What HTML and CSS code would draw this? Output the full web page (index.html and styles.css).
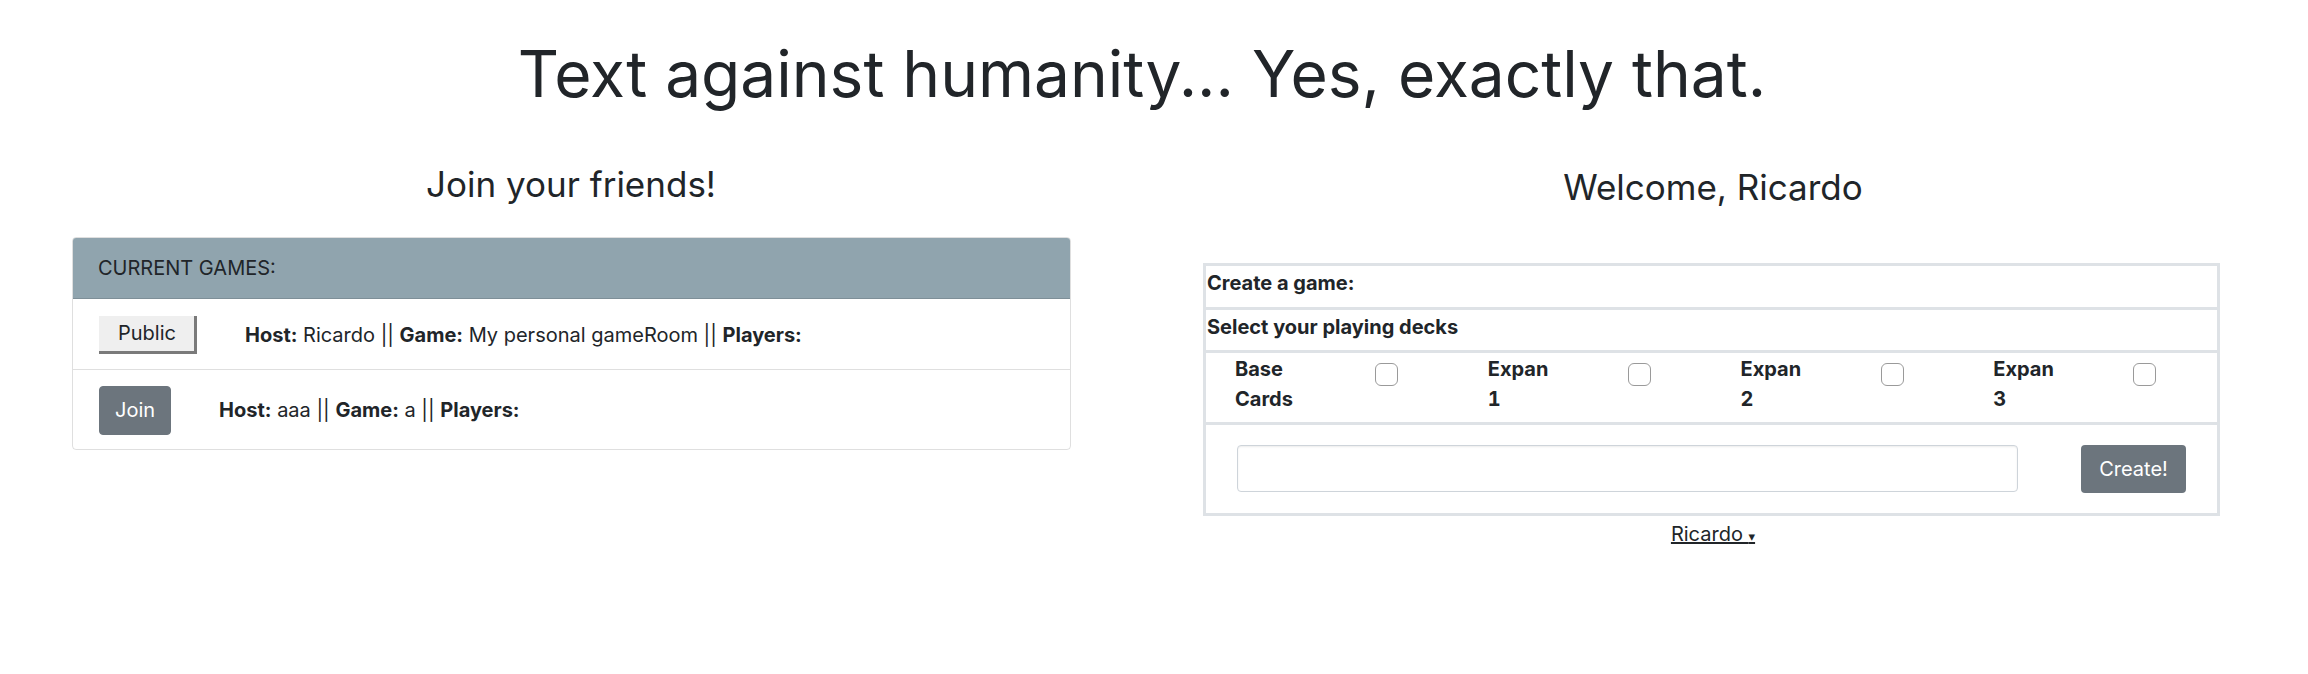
FILE: index.html
```html
<!DOCTYPE html>
<html lang="en">
<head>
<meta charset="utf-8">
<title>Text against humanity</title>
<link rel="stylesheet" href="styles.css">
</head>
<body>
<div class="page">
  <h1 class="title">Text against humanity... Yes, exactly that.</h1>
  <div class="columns">
    <section class="col col-left">
      <h3 class="col-heading">Join your friends!</h3>
      <div class="card">
        <div class="card-header">CURRENT GAMES:</div>
        <div class="game-row game-row-first">
          <button class="btn-public">Public</button>
          <span class="game-info"><b>Host:</b> Ricardo || <b>Game:</b> My personal gameRoom || <b>Players:</b></span>
        </div>
        <div class="game-row game-row-second">
          <button class="btn-join">Join</button>
          <span class="game-info"><b>Host:</b> aaa || <b>Game:</b> a || <b>Players:</b></span>
        </div>
      </div>
    </section>
    <section class="col col-right">
      <h3 class="col-heading col-heading-right">Welcome, Ricardo</h3>
      <div class="create-box">
        <div class="create-row create-title">Create a game:</div>
        <div class="create-row create-sub">Select your playing decks</div>
        <div class="create-row decks">
          <div class="deck"><span class="deck-label">Base Cards</span><input type="checkbox" class="deck-check"></div>
          <div class="deck"><span class="deck-label">Expan 1</span><input type="checkbox" class="deck-check"></div>
          <div class="deck"><span class="deck-label">Expan 2</span><input type="checkbox" class="deck-check"></div>
          <div class="deck"><span class="deck-label">Expan 3</span><input type="checkbox" class="deck-check"></div>
        </div>
        <div class="create-row create-form">
          <input type="text" class="room-input">
          <button class="btn-create">Create!</button>
        </div>
      </div>
      <div class="user-menu"><a href="#" class="user-link">Ricardo <span class="caret">▾</span></a></div>
    </section>
  </div>
</div>
</body>
</html>
```
FILE: styles.css
```css
* { box-sizing: border-box; }
html, body { margin: 0; padding: 0; background: #fff; }
body {
  font-family: Inter, "Noto Sans", "Liberation Sans", sans-serif;
  font-size: 20px;
  line-height: 1.5;
  color: #212529;
}
.page {
  width: 2284px;
  padding-top: 36px;
}
.title {
  margin: 0;
  font-size: 64px;
  font-weight: 400;
  line-height: 1.2;
  text-align: center;
}
.columns {
  display: grid;
  grid-template-columns: 1142px 1142px;
  margin-top: 50px;
}
.col { display: flex; flex-direction: column; }
.col-heading {
  margin: 0;
  font-size: 35px;
  font-weight: 400;
  line-height: 1.2;
  text-align: center;
}
.col-heading-right { margin-top: 3px; }

/* Left card */
.card {
  margin: 32px 71px 0 72px;
  border: 1px solid rgba(0,0,0,.125);
  border-radius: 4px;
  overflow: hidden;
}
.card-header {
  background: #90a4ae;
  padding: 15px 25px;
  line-height: 30px;
  border-bottom: 1px solid rgba(0,0,0,.125);
}
.game-row {
  display: flex;
  align-items: center;
  padding: 2px 26px 0;
}
.game-row-first { height: 71px; border-bottom: 1px solid rgba(0,0,0,.125); }
.game-row-second { height: 79px; }
.game-info { margin-left: 48px; }
.btn-public {
  font: inherit;
  color: #212529;
  height: 38px;
  padding: 0 18px 0 19px;
  background: #efefef;
  border: 0;
  border-right: 3px solid #7a7a7a;
  border-bottom: 3px solid #7a7a7a;
  border-radius: 0;
}
.btn-join {
  font: inherit;
  color: #fff;
  height: 49px;
  padding: 0 15px;
  background: #6c757d;
  border: 1px solid #6c757d;
  border-radius: 4px;
}

/* Right create box */
.create-box {
  margin: 55px 64px 0 61px;
  border: 3px solid #dee2e6;
  background: #dee2e6;
  display: flex;
  flex-direction: column;
  gap: 3px;
}
.create-row { background: #fff; }
.create-title { height: 41px; padding: 2px 1px 0; font-weight: 700; }
.create-sub { height: 40px; padding: 2px 1px 0; font-weight: 700; }
.decks {
  height: 69px;
  display: grid;
  grid-template-columns: repeat(4, 1fr);
  padding-top: 1px;
}
.deck {
  display: flex;
  align-items: flex-start;
  padding-left: 29px;
}
.deck-label {
  width: 74px;
  font-weight: 700;
  line-height: 30px;
  margin-right: 66px;
  font-variant-numeric: tabular-nums;
}
.deck-check {
  appearance: none;
  -webkit-appearance: none;
  margin: 9px 0 0;
  width: 23px;
  height: 23px;
  border: 1px solid #9a9a9a;
  border-radius: 6px;
  background: #fff;
}
.create-form {
  height: 88px;
  display: flex;
  align-items: center;
  padding: 0 31px 0 31px;
}
.room-input {
  flex: 1;
  height: 47px;
  border: 1px solid #ced4da;
  border-radius: 4px;
  box-shadow: inset 0 1px 2px rgba(0,0,0,.08);
  margin-right: 63px;
  font: inherit;
}
.btn-create {
  font: inherit;
  color: #fff;
  width: 105px;
  height: 48px;
  padding: 0;
  background: #6c757d;
  border: 0;
  border-radius: 4px;
}
.user-menu {
  text-align: center;
  margin-top: 3px;
}
.user-link {
  color: #212529;
  text-decoration: underline;
}
.caret {
  font-family: "DejaVu Sans", sans-serif;
  font-size: 13px;
}
```
